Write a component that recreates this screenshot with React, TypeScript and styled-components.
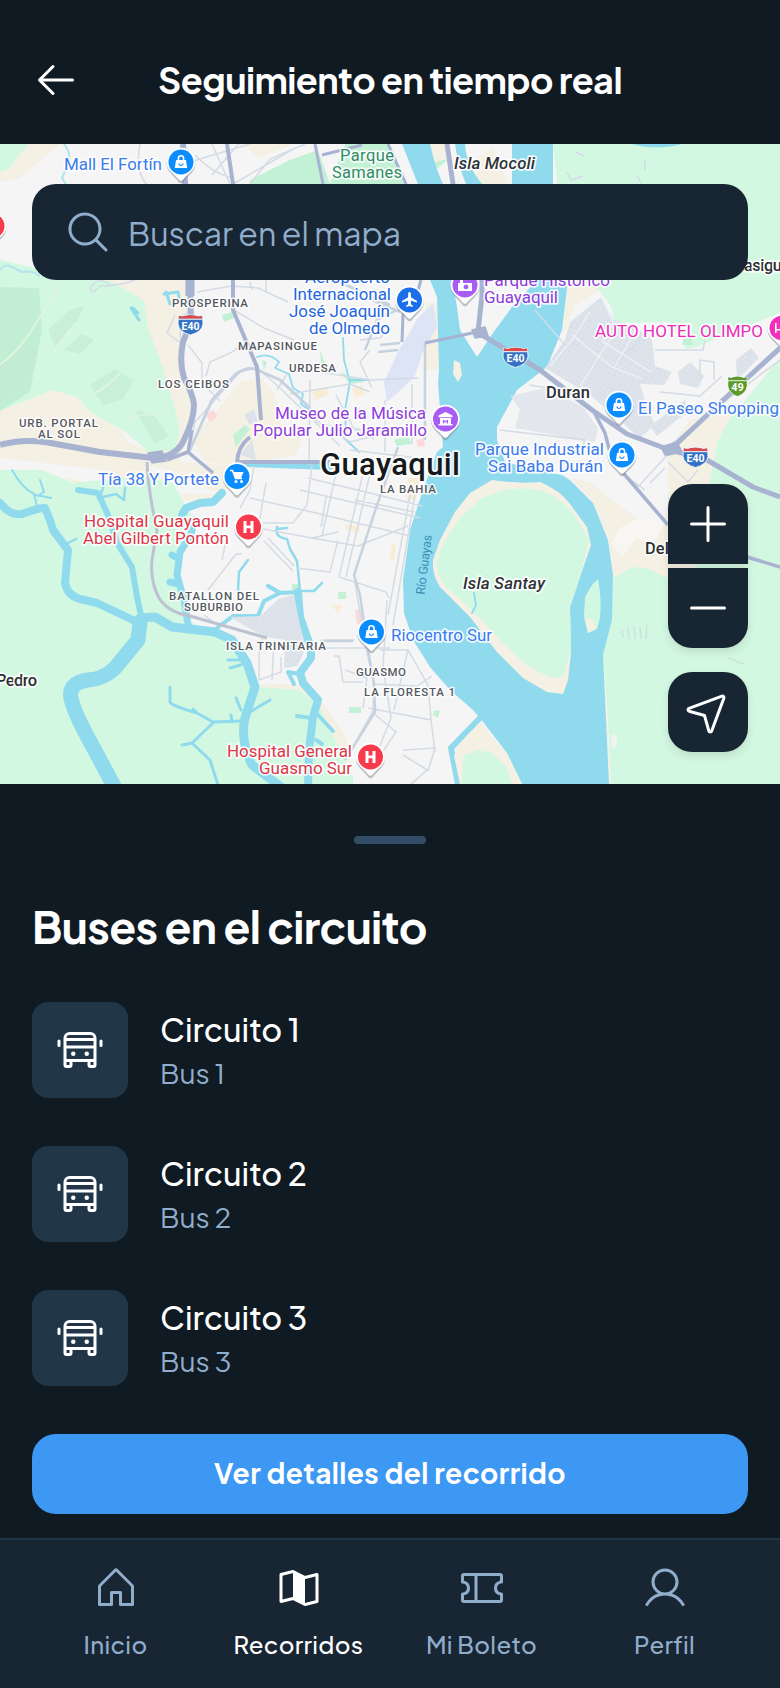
import React from "react";
import styled, { createGlobalStyle } from "styled-components";
import {
  PiArrowLeft,
  PiHouse,
  PiMagnifyingGlass,
  PiMinus,
  PiNavigationArrow,
  PiPlus,
  PiTicket,
  PiUser,
} from "react-icons/pi";

const color = {
  page: "#101a23",
  surface: "#182634",
  tile: "#223649",
  handle: "#314d68",
  muted: "#90adcb",
  accent: "#3d98f4",
  white: "#ffffff",
};

const GlobalStyle = createGlobalStyle`
  *, *::before, *::after { box-sizing: border-box; }
  body {
    margin: 0;
    background: ${color.page};
    font-family: "Plus Jakarta Sans", Inter, "Noto Sans", sans-serif;
    color: ${color.white};
  }
  h1, h2, p { margin: 0; }
  button { font: inherit; color: inherit; border: 0; padding: 0; background: none; }
`;

const Screen = styled.div`
  display: flex;
  flex-direction: column;
  width: 780px;
  height: 1688px;
  overflow: hidden;
  background: ${color.page};
`;

const Header = styled.header`
  display: flex;
  align-items: center;
  height: 144px;
  padding: 32px 32px 16px;
`;

const BackButton = styled.button`
  display: flex;
  width: 96px;
  height: 48px;
`;

const Title = styled.h1`
  flex: 1;
  padding-right: 96px;
  text-align: center;
  font-size: 36px;
  line-height: 46px;
  font-weight: 700;
  letter-spacing: -0.015em;
  white-space: nowrap;
`;

const MapArea = styled.section`
  position: relative;
  display: flex;
  flex-direction: column;
  justify-content: space-between;
  height: 640px;
  padding: 40px 32px 32px;
`;

const MapCanvas = styled.svg`
  position: absolute;
  inset: 0;
  width: 780px;
  height: 640px;
  font-family: Roboto, sans-serif;
`;

const SearchField = styled.div`
  position: relative;
  display: flex;
  align-items: center;
  gap: 16px;
  height: 96px;
  padding: 0 32px;
  border-radius: 24px;
  background: ${color.surface};
  color: ${color.muted};
`;

const Placeholder = styled.span`
  padding-top: 2px;
  font-size: 32px;
  line-height: 48px;
  font-weight: 400;
`;

const Controls = styled.div`
  position: relative;
  display: flex;
  flex-direction: column;
  align-items: flex-end;
  gap: 24px;
`;

const ZoomGroup = styled.div`
  display: flex;
  flex-direction: column;
  gap: 4px;
`;

const ControlButton = styled.button<{ $corners: string; $flip?: boolean }>`
  display: flex;
  align-items: center;
  justify-content: center;
  width: 80px;
  height: 80px;
  border-radius: ${(p) => p.$corners};
  background: ${color.surface};
  box-shadow: 0 4px 8px rgba(0, 0, 0, 0.1);
  svg {
    transform: ${(p) => (p.$flip ? "translate(1px, -1px) scaleX(-1)" : "none")};
  }
`;

const Sheet = styled.section`
  display: flex;
  flex-direction: column;
  height: 754px;
  padding: 52px 32px 24px;
`;

const Handle = styled.div`
  align-self: center;
  width: 72px;
  height: 8px;
  border-radius: 4px;
  background: ${color.handle};
`;

const SheetTitle = styled.h2`
  margin-top: 54px;
  font-size: 44px;
  line-height: 56px;
  font-weight: 700;
  letter-spacing: -0.015em;
`;

const BusList = styled.div`
  display: flex;
  flex-direction: column;
  gap: 48px;
  margin-top: 48px;
`;

const BusRow = styled.div`
  display: flex;
  align-items: center;
  gap: 32px;
  height: 96px;
`;

const BusTile = styled.div`
  display: flex;
  align-items: center;
  justify-content: center;
  width: 96px;
  height: 96px;
  border-radius: 16px;
  background: ${color.tile};
`;

const BusText = styled.div`
  display: flex;
  flex-direction: column;
  padding-bottom: 2px;
`;

const BusName = styled.p`
  font-size: 32px;
  line-height: 48px;
  font-weight: 500;
`;

const BusDetail = styled.p`
  font-size: 28px;
  line-height: 40px;
  font-weight: 400;
  color: ${color.muted};
`;

const PrimaryButton = styled.button`
  height: 80px;
  margin-top: auto;
  padding-bottom: 2px;
  border-radius: 24px;
  background: ${color.accent};
  font-size: 28px;
  line-height: 42px;
  font-weight: 700;
  letter-spacing: 0.015em;
`;

const TabBar = styled.nav`
  display: flex;
  gap: 16px;
  height: 150px;
  padding: 16px 32px 0;
  border-top: 2px solid ${color.tile};
  background: ${color.surface};
`;

const Tab = styled.button<{ $active?: boolean }>`
  display: flex;
  flex: 1;
  flex-direction: column;
  align-items: center;
  gap: 8px;
  padding-top: 8px;
  color: ${(p) => (p.$active ? color.white : color.muted)};
  svg {
    flex: none;
  }
`;

const TabLabel = styled.span`
  padding-top: 6px;
  font-size: 24px;
  line-height: 36px;
  font-weight: 500;
  letter-spacing: 0.015em;
  white-space: nowrap;
`;

const BusIcon = () => (
  <svg width="48" height="48" viewBox="0 0 256 256" fill="none" stroke="currentColor" strokeWidth="16" strokeLinecap="round" strokeLinejoin="round">
    <path d="M48 184V64a24 24 0 0 1 24-24h112a24 24 0 0 1 24 24v120M48 72h160M48 112h160M48 184h160M48 184v24a8 8 0 0 0 8 8h16a8 8 0 0 0 8-8v-24M176 184v24a8 8 0 0 0 8 8h16a8 8 0 0 0 8-8v-24M16 80v24M240 80v24" />
    <g fill="currentColor" stroke="none">
      <circle cx="92" cy="148" r="12" />
      <circle cx="164" cy="148" r="12" />
    </g>
  </svg>
);

const FoldedMapIcon = () => (
  <svg width="48" height="48" viewBox="0 0 256 256" stroke="currentColor" strokeWidth="16" strokeLinejoin="round">
    <path d="M96 184l-64 16V56l64-16 64 32 64-16v144l-64 16z" fill="none" />
    <path d="M96 32l64 40v144l-64-32z" fill="currentColor" stroke="none" />
  </svg>
);

type Tone = "place" | "transit" | "park" | "culture" | "health" | "hotel" | "town" | "island" | "district" | "city";

const tones: Record<Tone, { fill: string; size: number; weight: number; halo: number }> = {
  place: { fill: "#3a7bee", size: 17, weight: 400, halo: 3.5 },
  transit: { fill: "#1f66dd", size: 17, weight: 400, halo: 3.5 },
  park: { fill: "#2f8c64", size: 16.5, weight: 400, halo: 3.5 },
  culture: { fill: "#8e3cdc", size: 17, weight: 400, halo: 3.5 },
  health: { fill: "#de3648", size: 17, weight: 400, halo: 3.5 },
  hotel: { fill: "#ee2bb8", size: 17, weight: 400, halo: 3.5 },
  town: { fill: "#2b2e32", size: 16.5, weight: 500, halo: 3.5 },
  island: { fill: "#2f3236", size: 17, weight: 500, halo: 3.5 },
  district: { fill: "#55595f", size: 11.5, weight: 500, halo: 3 },
  city: { fill: "#16181b", size: 31, weight: 500, halo: 4 },
};

type LabelData = [text: string, x: number, y: number, width: number, tone: Tone, italic?: boolean];

const labels: LabelData[] = [
  ["Mall El Fortín", 64, 169.5, 98, "place"],
  ["Parque", 340, 161, 54, "park"],
  ["Samanes", 332, 177.5, 70, "park"],
  ["Isla Mocoli", 454, 168.5, 81, "island", true],
  ["asigu", 744, 271, 38, "town"],
  ["Aeropuerto", 305, 283, 85, "transit"],
  ["Internacional", 293, 299.5, 98, "transit"],
  ["José Joaquín", 289, 316.5, 101, "transit"],
  ["de Olmedo", 309, 333.5, 81, "transit"],
  ["Parque Histórico", 484, 286, 126, "culture"],
  ["Guayaquil", 484, 302.5, 74, "culture"],
  ["PROSPERINA", 172, 306.5, 76, "district"],
  ["MAPASINGUE", 238, 350, 79, "district"],
  ["URDESA", 289, 371.5, 47, "district"],
  ["LOS CEIBOS", 158, 388, 71, "district"],
  ["URB. PORTAL", 19, 427, 79, "district"],
  ["AL SOL", 38, 438, 42, "district"],
  ["AUTO HOTEL OLIMPO", 595, 337, 168, "hotel"],
  ["Duran", 546, 398, 44, "town"],
  ["El Paseo Shopping", 638, 413.5, 141, "place"],
  ["Museo de la Música", 275, 418.5, 151, "culture"],
  ["Popular Julio Jaramillo", 253, 435.5, 174, "culture"],
  ["Parque Industrial", 475, 455, 129, "place"],
  ["Sai Baba Durán", 488, 471.5, 115, "place"],
  ["Guayaquil", 320, 474.5, 140, "city"],
  ["LA BAHIA", 380, 493, 56, "district"],
  ["Tía 38 Y Portete", 98, 485, 121, "place"],
  ["Hospital Guayaquil", 84, 527, 145, "health"],
  ["Abel Gilbert Pontón", 83, 544, 146, "health"],
  ["Del", 645, 554, 24, "town"],
  ["Isla Santay", 463, 589, 82, "island", true],
  ["BATALLON DEL", 169, 600, 90, "district"],
  ["SUBURBIO", 184, 611, 59, "district"],
  ["ISLA TRINITARIA", 226, 650, 100, "district"],
  ["Riocentro Sur", 391, 640.5, 101, "place"],
  ["GUASMO", 356, 675.5, 50, "district"],
  ["LA FLORESTA 1", 364, 696, 91, "district"],
  ["Pedro", -4, 686, 41, "town"],
  ["Hospital General", 227, 757, 125, "health"],
  ["Guasmo Sur", 259, 774, 93, "health"],
];

type Glyph = "bag" | "cart" | "plane" | "museum" | "camera" | "hospital" | "bed";

const glyphs: Record<Glyph, React.ReactNode> = {
  bag: (
    <>
      <path d="M-5 -2h10l1.2 8h-12.4z" fill="#fff" />
      <path d="M-2.6 -1v-2.6a2.6 2.6 0 0 1 5.2 0v2.6" fill="none" stroke="#fff" strokeWidth="1.6" />
      <path d="M-2 1.5a2 2 0 0 0 4 0" fill="none" stroke="#0b8cff" strokeWidth="1.2" />
    </>
  ),
  cart: (
    <>
      <path d="M-7 -6h2.5l3 8h6.5" fill="none" stroke="#fff" strokeWidth="1.6" />
      <path d="M-4 -4.5h10.5l-2.5 6h-6z" fill="#fff" />
      <circle cx="-1" cy="5" r="1.5" fill="#fff" />
      <circle cx="4.5" cy="5" r="1.5" fill="#fff" />
    </>
  ),
  plane: <path d="M0 -8c1 0 1.4 1.2 1.4 2.4v2.8l6.1 3.7v1.7l-6.1-1.8v3.4l1.8 1.4v1.4l-3.2-.9-3.2.9v-1.4l1.8-1.4v-3.4l-6.1 1.8v-1.7l6.1-3.7v-2.8c0-1.2.4-2.4 1.4-2.4z" fill="#fff" />,
  museum: (
    <path d="M0 -7l7 3.6v1.6h-14v-1.6zM-5.5 -1h11v6h1.5v1.5h-14v-1.5h1.5zM-2.6 1v3.6h1.2v-2l1.4 1.2 1.4-1.2v2h1.2v-3.6h-1.2l-1.4 1.5-1.4-1.5z" fill="#fff" fillRule="evenodd" />
  ),
  camera: (
    <path d="M-7 -2h2v-3h3v3h9v8h-14zM1 -.5a2.4 2.4 0 1 0 .01 0z" fill="#fff" fillRule="evenodd" />
  ),
  hospital: <path d="M-5 -6h3v4.6h4v-4.6h3v12h-3v-4.8h-4v4.8h-3z" fill="#fff" />,
  bed: <path d="M-7 -5h1.6v6h4.4v-4h6a2 2 0 0 1 2 2v6h-1.6v-2.4h-10.8v2.4h-1.6z" fill="#fff" />,
};

type PinData = [x: number, y: number, fill: string, glyph: Glyph];

const pins: PinData[] = [
  [181, 162, "#0b8cff", "bag"],
  [-8, 226, "#f83b4c", "hospital"],
  [409.5, 300, "#1a6fe8", "plane"],
  [465, 285, "#a95cf5", "camera"],
  [445.5, 419, "#a95cf5", "museum"],
  [782, 328, "#f32fc0", "bed"],
  [619, 405, "#0b8cff", "bag"],
  [622, 455, "#0b8cff", "bag"],
  [237, 476.5, "#0b8cff", "cart"],
  [248.5, 527, "#f83b4c", "hospital"],
  [371.5, 632, "#0b8cff", "bag"],
  [370.5, 757, "#f83b4c", "hospital"],
];

const MapLabel = ({ data: [text, x, y, width, tone, italic] }: { data: LabelData }) => {
  const t = tones[tone];
  return (
    <text
      x={x}
      y={y}
      textLength={width}
      fill={t.fill}
      fontSize={t.size}
      fontWeight={t.weight}
      fontStyle={italic ? "italic" : "normal"}
      stroke="#fff"
      strokeOpacity={0.85}
      strokeWidth={t.halo}
      strokeLinejoin="round"
      paintOrder="stroke"
    >
      {text}
    </text>
  );
};

const Pin = ({ data: [x, y, fill, glyph] }: { data: PinData }) => (
  <g transform={`translate(${x} ${y})`}>
    <path d="M-14 3.5A14.4 14.4 0 1 1 14 3.5C12.5 9.5 6 13 2.5 18.5Q0 21-2.5 18.5C-6 13-12.5 9.5-14 3.5z" transform="translate(0 1.5)" fill="#7d8794" opacity="0.5" />
    <path d="M-14 3.5A14.4 14.4 0 1 1 14 3.5C12.5 9 6 12.5 2.2 17.5Q0 20-2.2 17.5C-6 12.5-12.5 9-14 3.5z" fill="#fff" />
    <circle r="12.5" fill={fill} />
    {glyphs[glyph]}
  </g>
);

const Shield = ({ x, y, text, green }: { x: number; y: number; text: string; green?: boolean }) => {
  const s = green ? 0.78 : 1;
  return (
    <g transform={`translate(${x} ${y})`}>
      <g transform={`scale(${s} 1)`}>
        <path d="M-12 -9.5Q-8 -8-5 -9.5Q0 -11 5 -9.5Q8 -8 12 -9.5L12.5 -1Q11.5 7 0 10Q-11.5 7-12.5 -1z" fill={green ? "#5c9a2c" : "#3572c6"} stroke="#fff" strokeWidth="0.8" />
        <path d="M-11.5 -9.2Q-8 -8-5 -9.2Q0 -10.5 5 -9.2Q8 -8 11.5 -9.2L11.8 -6.3h-23.6z" fill={green ? "#5c9a2c" : "#e04848"} />
        <path d="M-12 -5.8h24" stroke="#fff" strokeWidth="1" />
      </g>
      <text y="4.5" textAnchor="middle" fontSize={green ? 11 : 10.5} fontWeight="700" fill="#fff">
        {text}
      </text>
    </g>
  );
};

const CityMap = () => (
  <MapCanvas viewBox="0 144 780 640" role="img" aria-label="Mapa de Guayaquil">
    <defs>
      <pattern id="blocks" width="5" height="4.5" patternUnits="userSpaceOnUse" patternTransform="rotate(28)">
        <rect width="5" height="4.5" fill="#dbe1e9" />
        <path d="M0 0h5M0 0v4.5" stroke="#e6eaf0" strokeWidth="1" />
      </pattern>
    </defs>
    <rect y="144" width="780" height="640" fill="#f5f5f5" />

    {/* dry ground */}
    <g fill="#f5f0e4">
      <path d="M100 280H190L188 340 180 360 195 400 195 420 180 462 240 466 225 492 200 503 183 500 160 485 142 480 100 488 72 482 45 472 0 472V405L60 380z" />
      <path d="M225 400L240 382 262 378 275 395 282 425 302 440 296 455 240 466 205 462 192 440z" />
      <path d="M0 165L30 144H60L20 178 0 182z" />
      <path d="M243 144h50l-35 14z M420 144h30l-5 15-15 6z M473 160l20-12 15 36h-30z" />
      <path d="M568 280L630 280 600 290 575 305 562 340z" />
      <path d="M690 420L735 412 725 437 710 478 700 564 670 580 647 568 613 580 609 540 590 498 570 478 590 482 612 500 640 520 668 525 668 452z" />
      <path d="M603 652L611 784H605z" />
      <path d="M425 303h12l2 67h-14z" />
      <path d="M225 684L310 684 325 705 345 735 352 765 300 740z" />
    </g>
    <path d="M0 458L50 464 105 470 110 490 70 478 0 484zM115 412l8-4 3 20 22 22-20-8z M145 465l25 5 50 25-40-2z" fill="#f5f5f5" />
    <path d="M620 528l20-12 25 8-12 20-16-6-15 20-10-14z" fill="#f7f6f3" />

    {/* vegetation */}
    <g fill="#d3f8e2">
      <path d="M0 260L35 268 62 278 110 281 130 292 144 301 148 328 163 368 174 405 180 432 174 450 150 453 123 430 90 412 77 397 53 390 20 403 0 411z" />
      <path d="M0 144H28L10 168 0 172z" />
      <path d="M0 470L43 470 73 483 100 480 143 477 173 483 184 503 195 520 182 555 180 590 188 622 225 634 247 665 258 687 300 690 320 707 332 733 353 777 353 784H0z" />
      <path d="M553 144H780V313L697 347 686 349 682 337 670 322 616 323 610 305 593 282 568 280z" />
      <path d="M780 358L730 418 718 440 710 478 700 564 672 580 647 568 633 567 613 578 612 620 603 655 608 720 611 784H780z" />
    </g>
    <path d="M0 287L39 288 42 330 30 392 0 411z" fill="#c2efd4" />
    <g fill="#c2ecd2" opacity="0.6">
      <path d="M48 330l22-20 14-4-8 18-20 24zM64 350l18-16 12 6-14 14zM90 385l25-16 18 12-10 18-20 6zM135 410l18 4 16 22-14 8z" />
      <path d="M0 365l25-20 12 4-10 35-27 18z" />
    </g>
    <path d="M0 365Q20 350 35 325T60 285M55 350q14-20 22-28M92 395q18-10 28-22M128 420q16-8 30-5" fill="none" stroke="#dff5e0" strokeWidth="2" />
    <path d="M250 180L290 160 318 150 330 184 250 184zM345 144h45l14 40H330z" fill="#c3f1d5" />
    <path d="M222 315l10-3 2 6-10 4zM233 435l12-10 5 4-14 18zM320 350l6 16-5-2zM262 360l5 2-3 8zM430 164l20-6-15 12zM394 440l14-4 4 8-15 2zM682 345h10v-8h-8z M338 592h8v7h-8z M349 707h12v6h-12z M434 710l6 1-2 7-5-3zM292 584h7v6h-7zM340 372l25 10-15 2z" fill="#c3f1d5" />

    {/* water */}
    <path d="M402 144H430Q436 170 443 184L451 240 452 280 457 307 460 330 477 357 493 333 512 307 537 280 520 200 512 184V144H553L553 200 568 280 562 330 547 367 517 390 497 427 497 440 505 462 545 472 562 475 570 480 593 503 608 540 613 575 612 620 603 655 606 720 609 784H522L507 753 480 718 473 710 450 690 430 667 413 640 404 613 403 580 410 530 422 493 437 452 443 447 438 383 439 370 437 297 430 280 428 210 418 184z" fill="#90daee" />
    <path d="M455 144H465Q466 165 482 184H466Q458 165 455 144zM632 144H682Q656 151 632 144z" fill="#90daee" />
    <path d="M492 480Q520 484 540 482 560 490 570 504L587 527 591 545 580 577 570 607 571 653 568 680 563 694 547 692 523 678 497 652 470 617 440 587Q432 575 433 560L440 540 455 512 470 493z" fill="#f5f0e4" />
    <path d="M503 490Q530 486 548 493 565 502 576 517L589 540 580 577 570 607 571 650 563 676Q557 680 545 675L525 664 500 640 475 613 446 587Q437 575 436 562L444 542 460 518 482 498z" fill="#d3f8e2" />
    <path d="M598 579Q602 600 600 618L597 629 588 633 584 617 585 597 592 585z" fill="#d3f8e2" />
    <path d="M585 620l6-2 6 10-9 5z M454 360l6 3 2 12-4 7-5-8z" fill="#f5f0e4" />
    <g fill="none" stroke="#90daee" strokeLinecap="round" strokeLinejoin="round">
      <path d="M0 503Q12 518 25 513T45 508Q51 522 53 530L68 550 65 583Q67 595 80 599L97 603 133 620 143 627" strokeWidth="8" />
      <path d="M12 470q10 18 22 24l4 16M36 495l15 3M40 480l4 12-6 4" strokeWidth="2" />
      <path d="M140 618L155 617 172 627 215 632 232 640 247 663 255 687 245 718Q240 740 252 765L285 790" strokeWidth="9" />
      <path d="M140 622L138 640 115 668Q104 679 88 680 68 683 71 698T92 745L116 790" strokeWidth="15" />
      <path d="M78 490L98 493 108 515 117 543 132 567 137 597 142 620" strokeWidth="6" />
      <path d="M98 498l18-4 8 6 1-12M104 485l-4 12M68 543l8-4" strokeWidth="2.5" />
      <path d="M222 493L213 502 200 503 186 508 182 515" strokeWidth="8" />
      <path d="M194 520L191 535 180 552 177 575 184 600 188 624M170 582l8 2M172 555l7 4" strokeWidth="7" />
      <path d="M217 628L233 616 258 616 264 601 280 593 300 592M280 593l-12-7" strokeWidth="4" />
      <path d="M248 560l-9 12-1 18 8 10M277 527q-3 10 10 12l3 10 7 12 3 30h14l8-8M277 529l10-1M268 585l14 8" strokeWidth="2.5" />
      <path d="M298 592L300 617 311 648 311 658 300 673 303 683 318 700 313 717 309 750 308 790" strokeWidth="8" />
      <path d="M317 714L333 731M311 718l-14-2M316 740l6 4M300 674l-12-2 6 12" strokeWidth="4" />
      <path d="M170 687V702Q172 706 197 713L213 722 242 721M213 723L192 743 210 760 219 788M192 743l-10 2M241 710l-5-12M250 712l20-12M230 668l14-4M228 660l14 0M197 713l-4-4M232 722l-1-7" strokeWidth="3" />
      <path d="M248 464L330 467M480 718L451 748 458 784" strokeWidth="6" />
      <path d="M257 357q12-5 22 5l-4 6 14 6 4 14 10 6-2 10 8 6M343 338l1 22 6 22-5 28 1 26M350 380h17M343 437l16 15M474 593l2 12-4 8" strokeWidth="1.8" />
      <path d="M164 294l14-2 2 9 7 4M166 292l4 12M131 308l8 12M133 308l5 5" strokeWidth="3" />
      <path d="M0 270q4-6 10-4l12 6q12-2 17 4M64 144q8 10 4 20l-6 14 5 8" stroke="#b3e4ee" strokeWidth="2" />
    </g>
    <path d="M480 722L459 744 454 756 460 784H522L507 754z" fill="#f5f0e4" />
    <path d="M463 756L478 750 492 753 506 766 512 784H462z" fill="#d3f8e2" />

    {/* built-up blocks and the airport */}
    <g fill="url(#blocks)">
      <path d="M601 297L614 320 635 326 652 340 655 366 672 372 664 385 640 384 648 410 655 425 640 438 610 412 590 395 545 368 565 340 570 322 585 310z" />
      <path d="M510 396L545 388 582 406 598 428 595 442 560 436 515 428 520 410z" opacity="0.75" />
      <path d="M736 360l15-12 8 10-22 22zM657 436l30-24-2-12-35 26zM678 372l12-10 14 14-6 12-18-4z" />
      <path d="M230 617L260 616 280 598 294 595 300 625 306 648 297 666 284 668 285 640 262 636z" />
      <path d="M244 415l10-6 4 14-8 2z M240 455l12-15 4 20z" />
    </g>
    <path d="M433 303L437 327 423 352 414 378 387 402 384 382 399 350 418 318z" fill="#dde4f6" />
    <g fill="#fbe8c8" opacity="0.7">
      <path d="M312 392l14-5 3 8-14 5zM352 388l10-3 3 9-10 4zM345 524l14 2 1 6-14-2zM392 544l4 1-2 16-5-1zM332 605h10l-4 9zM408 478h12l-5 22h-8z" />
    </g>
    <path d="M205 414l8-4 5 6-8 6zM355 610h6l2 14h-6zM416 440l8-2 1 8-7 1z" fill="#fbd9dc" />

    {/* street network */}
    <g fill="none" stroke="#d3dbe5" strokeWidth="1.5">
      <path d="M140 144q-6 30 10 44M190 162l60-18M212 144l18 40M212 175l30-35 M250 184l20-25 35-15M195 155q20 20 36 22M235 183l60-35" />
      <path d="M197 292l35-6 26 2 30 14M250 282l2 8M266 280v12M234 310l30 18 30 12M188 345l14 18 0 20 18 18M206 376l4-14 22-10 14-10M189 452l6-30 45-50 16-4M262 372l18 16 60 58M277 390l10-16" />
      <path d="M175 315l-8 18 14 10-2-24 10-8M310 380l-1 85M290 394l60-10 20 8M320 372l50 8 48-2M325 425l80 10M336 395l18 34 20 10M370 350l-10 12 12 26M360 340l20-2 10-10M300 410l50 32 20-5M385 400v52M412 384v60M350 450l85 10" />
      <path d="M254 466l-4 24-10 18M266 483l-6 35-2 20M250 498l62 14 98 24M300 490l120 28M308 478l115 28M312 465l-5 40-14 18h-30M338 464l-16 72M365 465l-26 112M372 465l-26 112M410 495l-22 120M415 495l-22 130M242 525l70 13 46 8 50-20M264 541l29 30M268 538l26 28M312 538l26-6M338 540l-8 32-34-4M339 577l47 15 3 6M355 500l60 12M326 497l-5 30" />
      <path d="M387 600l-4 68 8 50-16 40M355 583l12 70 7 30-1 28-25 45M334 656h5l4 26h20M325 640h30M310 648h80M380 650h28l20 35M408 650l-14 60M372 684l45 2 15-10M368 708l63 12 4 32M372 712l24 20-20 30-6-3M345 670l22 8-4 30M403 750l32-2-6 20-20 18M428 685l3 34M403 755l26 16" />
      <path d="M208 590l28-36 6 0M222 560l5-24M204 615l8 6M263 635l-4 20 0 25 22-8 0-15M274 640l-2 40" />
      <path d="M535 310l30 35M640 340l-25 25M530 385l60 10M500 430l85 10-5 12M625 475l20 15M670 452l-32 35-18-18M650 483l15-15M668 462l20 20 10-12M655 350l48 0 2-10M700 380v-20l14 2v18M660 392l40 4 22-20" />
      <path d="M110 286q-10-12-20 2 2 8 10-2 20 0 35-6" />
      <path d="M576 152l8 4M567 172l4 8 12-4M637 175l4 8M645 160v10M780 360l-60 45-50 40" />
    </g>
    <g fill="none" stroke="#f1f3f6" strokeWidth="1.2">
      <path d="M572 335l40 32 30 12M590 312l-18 28-22 26M620 324l-26 40-14 22M636 330l-22 38M603 300l10 22-10 20 48 30" />
    </g>
    <g fill="none" stroke="#c7d2df" strokeWidth="2.5">
      <path d="M398 447L377 505 354 575 360 595 368 650 374 684 375 712 345 760M425 343V440M380 345l20-2M320 641h33M398 350l-20 2M372 300l28 12M335 280l55 25M365 350l12-30 20-10" />
      <path d="M189 452L212 400 236 374Q250 364 262 372L280 380 310 408" strokeWidth="3" />
    </g>

    {/* motorways */}
    <g fill="none" stroke="#a7b3d0" strokeLinejoin="round">
      <path d="M0 445Q20 439 45 442L100 452 153 458Q174 458 183 442 194 420 194 405 193 394 184 378 179 362 183 342L191 322 190 280 183 144" strokeWidth="6" />
      <path d="M190 280v16" strokeWidth="9" />
      <path d="M227 144L233 184 233 310 257 367 261 420M250 437Q238 446 237 462H330" strokeWidth="4" />
      <path d="M167 460L188 452 213 473M188 452L192 430" strokeWidth="3.5" />
      <path d="M315 144l8 40M388 144l18 40M322 155l40-10M421 280l-4 14-14 20-1 28M425 343L477 332" strokeWidth="3" />
      <path d="M447 144L453 184 482 270 482 295 478 332" strokeWidth="5" />
      <path d="M477 332L540 370 592 410 627 434 667 449 707 460 753 487 780 497M780 348L720 403 670 450" strokeWidth="5" />
      <path d="M593 410L605 433 612 460 668 525M747 557L780 567" strokeWidth="3.5" />
      <path d="M665 455l-4-8 16-5 5 10-14 3zM148 453l14-2 4 10-14 2zM472 330l13-3 3 9-13 2z" fill="#a7b3d0" strokeWidth="1.5" />
    </g>
    <path d="M147 462Q148 490 157 530L152 560Q150 580 158 596T190 616L267 638" fill="none" stroke="#bcc2cf" strokeWidth="3" />
    <g stroke="#c9d8d8" strokeWidth="1.5" opacity="0.7">
      <path d="M622 630l1 8M628 627l1 12M634 627l1 12M640 627l1 12M647 625l-1 14M728 658l16 6" fill="none" />
    </g>
    <path d="M612 734q6 0 5 8t-6 5z" fill="#f2f4f4" />

    {labels.map((data) => (
      <MapLabel key={`${data[0]}-${data[2]}`} data={data} />
    ))}
    <text transform="translate(424.5 595) rotate(-83)" textLength="60" fontSize="12.5" fill="#3c8fb4">
      Río Guayas
    </text>
    <Shield x={190.5} y={325} text="E40" />
    <Shield x={515.5} y={357.5} text="E40" />
    <Shield x={695.5} y={457.5} text="E40" />
    <Shield x={737.5} y={386.5} text="49" green />
    {pins.map((data) => (
      <Pin key={`${data[0]}-${data[1]}`} data={data} />
    ))}
  </MapCanvas>
);

const buses = [1, 2, 3];

export default function App() {
  return (
    <Screen>
      <GlobalStyle />
      <Header>
        <BackButton aria-label="Volver">
          <PiArrowLeft size={48} />
        </BackButton>
        <Title>Seguimiento en tiempo real</Title>
      </Header>

      <MapArea>
        <CityMap />
        <SearchField>
          <PiMagnifyingGlass size={48} />
          <Placeholder>Buscar en el mapa</Placeholder>
        </SearchField>
        <Controls>
          <ZoomGroup>
            <ControlButton $corners="24px 24px 0 0" aria-label="Acercar">
              <PiPlus size={48} />
            </ControlButton>
            <ControlButton $corners="0 0 24px 24px" aria-label="Alejar">
              <PiMinus size={48} />
            </ControlButton>
          </ZoomGroup>
          <ControlButton $corners="24px" $flip aria-label="Mi ubicación">
            <PiNavigationArrow size={48} />
          </ControlButton>
        </Controls>
      </MapArea>

      <Sheet>
        <Handle />
        <SheetTitle>Buses en el circuito</SheetTitle>
        <BusList>
          {buses.map((n) => (
            <BusRow key={n}>
              <BusTile>
                <BusIcon />
              </BusTile>
              <BusText>
                <BusName>Circuito {n}</BusName>
                <BusDetail>Bus {n}</BusDetail>
              </BusText>
            </BusRow>
          ))}
        </BusList>
        <PrimaryButton>Ver detalles del recorrido</PrimaryButton>
      </Sheet>

      <TabBar>
        <Tab>
          <PiHouse size={48} />
          <TabLabel>Inicio</TabLabel>
        </Tab>
        <Tab $active>
          <FoldedMapIcon />
          <TabLabel>Recorridos</TabLabel>
        </Tab>
        <Tab>
          <PiTicket size={48} />
          <TabLabel>Mi Boleto</TabLabel>
        </Tab>
        <Tab>
          <PiUser size={48} />
          <TabLabel>Perfil</TabLabel>
        </Tab>
      </TabBar>
    </Screen>
  );
}
